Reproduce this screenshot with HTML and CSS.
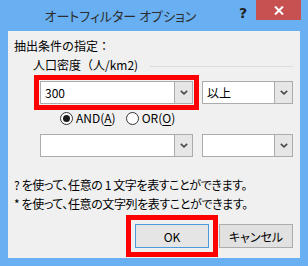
FILE: index.html
```html
<!DOCTYPE html>
<html lang="ja">

<head>
    <meta charset="UTF-8">
    <meta name="viewport" content="width=device-width, initial-scale=1.0">
    <link rel="stylesheet" href="styles.css">
    <title>オートフィルター オプション</title>
</head>

<body>

    <div class="window">
        <div class="titlebar">
            <span class="title">オートフィルター オプション</span>
            <span class="help">?</span>
            <span class="close">
                <svg width="10" height="9" viewBox="0 0 10 9">
                    <path d="M1 0.5 L9 8.5 M9 0.5 L1 8.5" stroke="#fff" stroke-width="2" fill="none"/>
                </svg>
            </span>
        </div>

        <div class="panel">
            <div class="label">抽出条件の指定：</div>

            <div class="group-head">
                <span>人口密度（人/km2)</span>
                <span class="rule"></span>
            </div>

            <div class="combo-row">
                <div class="combo wide marked">
                    <span class="value">300</span>
                    <span class="arrow"><svg width="8" height="5" viewBox="0 0 8 5"><path d="M0.8 0.8 L4 3.8 L7.2 0.8" stroke="#4a4a4a" stroke-width="1.6" fill="none"/></svg></span>
                </div>
                <div class="combo narrow">
                    <span class="value">以上</span>
                    <span class="arrow"><svg width="8" height="5" viewBox="0 0 8 5"><path d="M0.8 0.8 L4 3.8 L7.2 0.8" stroke="#4a4a4a" stroke-width="1.6" fill="none"/></svg></span>
                </div>
            </div>

            <div class="radios">
                <label class="radio"><span class="dot checked"></span>AND(<u>A</u>)</label>
                <label class="radio"><span class="dot"></span>OR(<u>O</u>)</label>
            </div>

            <div class="combo-row second">
                <div class="combo wide">
                    <span class="value"></span>
                    <span class="arrow"><svg width="8" height="5" viewBox="0 0 8 5"><path d="M0.8 0.8 L4 3.8 L7.2 0.8" stroke="#4a4a4a" stroke-width="1.6" fill="none"/></svg></span>
                </div>
                <div class="combo narrow">
                    <span class="value"></span>
                    <span class="arrow"><svg width="8" height="5" viewBox="0 0 8 5"><path d="M0.8 0.8 L4 3.8 L7.2 0.8" stroke="#4a4a4a" stroke-width="1.6" fill="none"/></svg></span>
                </div>
            </div>

            <p class="hint first">? を使って、任意の 1 文字を表すことができます。</p>
            <p class="hint">* を使って、任意の文字列を表すことができます。</p>

            <div class="buttons">
                <button class="btn default marked">OK</button>
                <button class="btn">キャンセル</button>
            </div>
        </div>
    </div>

</body>

</html>
```

FILE: styles.css
```css
body {
    margin: 0;
    font-family: 'Noto Sans CJK JP', 'Noto Sans', sans-serif;
    font-size: 12px;
    color: #000;
}

.window {
    width: 308px;
    height: 266px;
    box-sizing: border-box;
    background-color: #68b0f2;
    padding: 0 8px 8px;
    display: flex;
    flex-direction: column;
}

.titlebar {
    height: 31px;
    display: flex;
    align-items: flex-start;
    margin: 0 -8px;
}

.title {
    flex: 1;
    text-align: center;
    font-size: 13px;
    line-height: 31px;
    color: #2d2d2d;
    font-feature-settings: "palt";
    padding-left: 2px;
}

.help {
    font-family: 'DejaVu Sans', sans-serif;
    font-weight: bold;
    font-size: 14px;
    line-height: 26px;
    color: #222;
    margin-right: 9px;
}

.close {
    width: 45px;
    height: 20px;
    margin-right: 7px;
    background-color: #c75050;
    display: flex;
    align-items: center;
    justify-content: center;
}

.panel {
    flex: 1;
    background-color: #f0f0f0;
    padding: 7px 7px 0 6px;
    display: flex;
    flex-direction: column;
}

.label {
    line-height: 16px;
}

.group-head {
    margin-top: 3px;
    padding-left: 19px;
    line-height: 16px;
    display: flex;
    align-items: center;
}

.group-head .rule {
    flex: 1;
    height: 1px;
    margin-left: 12px;
    margin-top: 2px;
    background-color: #dcdcdc;
}

.combo-row {
    margin-top: 8px;
    padding-left: 26px;
    display: flex;
    gap: 9px;
}

.combo-row.second {
    margin-top: 8px;
}

.combo {
    height: 23px;
    box-sizing: border-box;
    border: 1px solid #acacac;
    background-color: #fff;
    display: flex;
}

.combo.wide {
    width: 153px;
}

.combo.narrow {
    width: 91px;
}

.combo .value {
    flex: 1;
    padding-left: 4px;
    line-height: 21px;
}

.combo .arrow {
    width: 17px;
    border-left: 1px solid #acacac;
    background-color: #e6e6e6;
    display: flex;
    align-items: center;
    justify-content: center;
}

.marked {
    outline: 5px solid #f00;
    outline-offset: 1px;
}

.radios {
    margin-top: 6px;
    padding-left: 46px;
    display: flex;
    gap: 10px;
    line-height: 16px;
}

.radio {
    display: flex;
    align-items: center;
}

.dot {
    width: 13px;
    height: 13px;
    box-sizing: border-box;
    border: 1px solid #333;
    border-radius: 50%;
    background-color: #fff;
    margin-right: 3px;
    display: flex;
    align-items: center;
    justify-content: center;
}

.dot.checked::after {
    content: '';
    width: 7px;
    height: 7px;
    border-radius: 50%;
    background-color: #1a1a1a;
}

.radio u {
    text-underline-offset: 2px;
}

.hint {
    margin: 0;
    line-height: 19px;
    font-feature-settings: "palt";
    letter-spacing: -0.4px;
}

.hint.first {
    margin-top: 18px;
}

.buttons {
    margin-top: 11px;
    display: flex;
    justify-content: flex-end;
    gap: 10px;
}

.btn {
    width: 74px;
    height: 24px;
    border: 1px solid #acacac;
    background-color: #e1e1e1;
    font-family: inherit;
    font-size: 12px;
    font-feature-settings: "palt";
    color: #000;
    padding: 0;
}

.btn.default {
    border-color: #4c9be0;
    background-color: #e5e5e5;
    outline-offset: 4px;
}
```
